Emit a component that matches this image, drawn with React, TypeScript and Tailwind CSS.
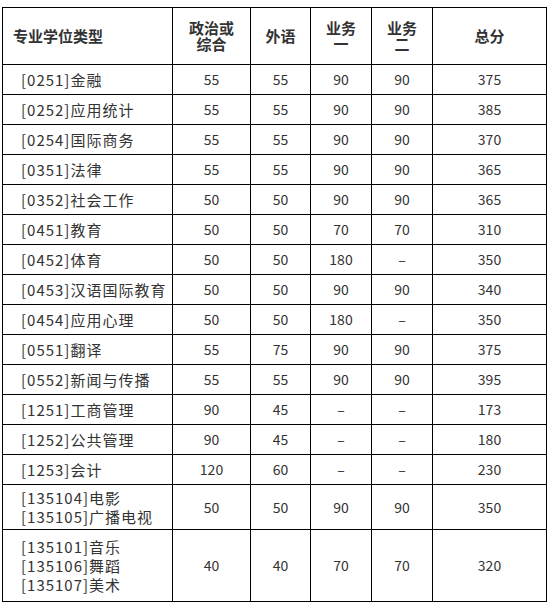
import React from "react";

type Row = { name: string[]; a: string; b: string; c: string; d: string; t: string; h: string };

const rows: Row[] = [
  { name: ["[0251]金融"], a: "55", b: "55", c: "90", d: "90", t: "375", h: "h-[30px]" },
  { name: ["[0252]应用统计"], a: "55", b: "55", c: "90", d: "90", t: "385", h: "h-[30px]" },
  { name: ["[0254]国际商务"], a: "55", b: "55", c: "90", d: "90", t: "370", h: "h-[30px]" },
  { name: ["[0351]法律"], a: "55", b: "55", c: "90", d: "90", t: "365", h: "h-[30px]" },
  { name: ["[0352]社会工作"], a: "50", b: "50", c: "90", d: "90", t: "365", h: "h-[30px]" },
  { name: ["[0451]教育"], a: "50", b: "50", c: "70", d: "70", t: "310", h: "h-[30px]" },
  { name: ["[0452]体育"], a: "50", b: "50", c: "180", d: "–", t: "350", h: "h-[30px]" },
  { name: ["[0453]汉语国际教育"], a: "50", b: "50", c: "90", d: "90", t: "340", h: "h-[30px]" },
  { name: ["[0454]应用心理"], a: "50", b: "50", c: "180", d: "–", t: "350", h: "h-[30px]" },
  { name: ["[0551]翻译"], a: "55", b: "75", c: "90", d: "90", t: "375", h: "h-[30px]" },
  { name: ["[0552]新闻与传播"], a: "55", b: "55", c: "90", d: "90", t: "395", h: "h-[30px]" },
  { name: ["[1251]工商管理"], a: "90", b: "45", c: "–", d: "–", t: "173", h: "h-[30px]" },
  { name: ["[1252]公共管理"], a: "90", b: "45", c: "–", d: "–", t: "180", h: "h-[30px]" },
  { name: ["[1253]会计"], a: "120", b: "60", c: "–", d: "–", t: "230", h: "h-[30px]" },
  { name: ["[135104]电影", "[135105]广播电视"], a: "50", b: "50", c: "90", d: "90", t: "350", h: "h-[45px]" },
  { name: ["[135101]音乐", "[135106]舞蹈", "[135107]美术"], a: "40", b: "40", c: "70", d: "70", t: "320", h: "h-[72px]" },
];

const font = { fontFamily: '"Noto Sans CJK SC", "Liberation Sans", sans-serif' };

export default function App() {
  return (
    <div className="w-[548px] h-[607px] bg-white pt-[7px] pl-[2px]" style={font}>
      <table className="border-collapse table-fixed w-[544px] text-[14px] text-[#333] leading-[19px]">
        <colgroup>
          <col className="w-[170px]" />
          <col className="w-[78px]" />
          <col className="w-[60px]" />
          <col className="w-[61px]" />
          <col className="w-[61px]" />
          <col className="w-[114px]" />
        </colgroup>
        <thead>
          <tr className="h-[57px] font-bold text-[15px] leading-[16px]">
            <th className="border border-black text-left pl-[10px] font-bold">专业学位类型</th>
            <th className="border border-black text-center font-bold">政治或<br />综合</th>
            <th className="border border-black text-center font-bold">外语</th>
            <th className="border border-black text-center font-bold">业务<br />一</th>
            <th className="border border-black text-center font-bold">业务<br />二</th>
            <th className="border border-black text-center font-bold">总分</th>
          </tr>
        </thead>
        <tbody>
          {rows.map((r, i) => (
            <tr key={i} className={r.h}>
              <td className="border border-black pl-[18px] p-0 text-[15px] tracking-[1px]">
                {r.name.map((n, j) => (
                  <div key={j}>{n}</div>
                ))}
              </td>
              <td className="border border-black text-center">{r.a}</td>
              <td className="border border-black text-center">{r.b}</td>
              <td className="border border-black text-center">{r.c}</td>
              <td className="border border-black text-center">{r.d}</td>
              <td className="border border-black text-center">{r.t}</td>
            </tr>
          ))}
        </tbody>
      </table>
    </div>
  );
}
